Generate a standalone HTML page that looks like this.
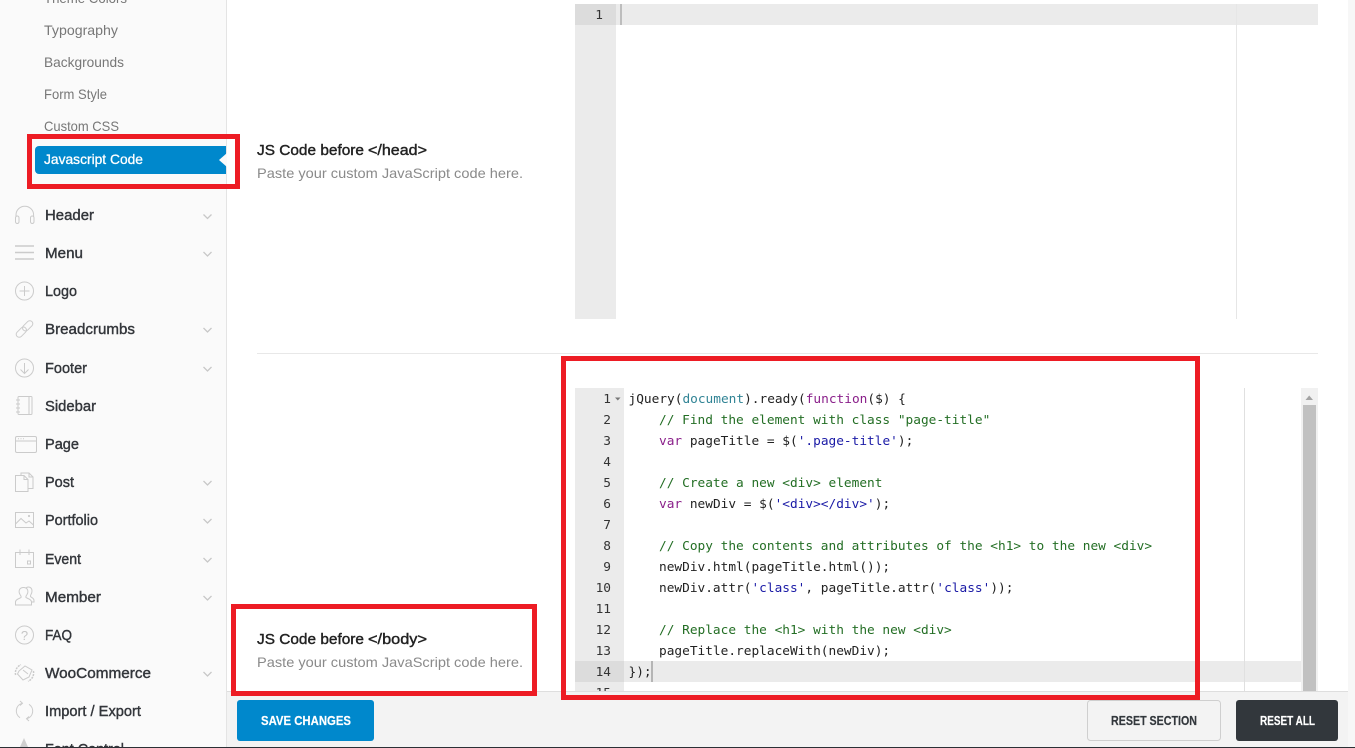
<!DOCTYPE html>
<html lang="en">
<head>
<meta charset="utf-8">
<title>Javascript Code</title>
<style>
html,body{margin:0;padding:0;width:1355px;height:748px;overflow:hidden;background:#fff}
svg{display:block}
.nav{font-family:"Liberation Sans",sans-serif;font-size:14.5px;fill:#33363b;stroke:#33363b;stroke-width:.4px}
.sub{font-family:"Liberation Sans",sans-serif;font-size:14px;fill:#777}
.lab{font-family:"Liberation Sans",sans-serif;font-size:14.5px;fill:#222;stroke:#222;stroke-width:.4px}
.desc{font-family:"Liberation Sans",sans-serif;font-size:14px;fill:#8a8a8a}
.btn{font-family:"Liberation Sans",sans-serif;font-size:13px;font-weight:bold;stroke-width:.2px}
.code{font-family:"DejaVu Sans Mono","Liberation Mono",monospace;font-size:12.8px;fill:#222}
.num{font-family:"DejaVu Sans Mono","Liberation Mono",monospace;font-size:12.8px;fill:#333;text-anchor:end}
.c{fill:#236e24}.k{fill:#8a1f8a}.s{fill:#1a1aa6}.d{fill:#318495}
.ic{fill:none;stroke:#cbcbcb;stroke-width:1}
.ch{fill:none;stroke:#c8c8c8;stroke-width:1.3}
</style>
</head>
<body>
<svg xmlns="http://www.w3.org/2000/svg" width="1355" height="748" viewBox="0 0 1355 748">
<defs>
<clipPath id="ed"><rect x="575" y="388" width="743" height="303"/></clipPath>
</defs>
<rect width="1355" height="748" fill="#fff"/>
<rect x="1348" y="0" width="7" height="748" fill="#f7f7f7"/>

<!-- sidebar -->
<rect x="0" y="0" width="226" height="748" fill="#fafafa"/>
<rect x="226" y="0" width="1" height="748" fill="#e4e4e4"/>
<text class="sub" x="44" y="3" textLength="83" lengthAdjust="spacingAndGlyphs">Theme Colors</text>
<text class="sub" x="44" y="35" textLength="74" lengthAdjust="spacingAndGlyphs">Typography</text>
<text class="sub" x="44" y="67" textLength="80" lengthAdjust="spacingAndGlyphs">Backgrounds</text>
<text class="sub" x="44" y="99" textLength="63" lengthAdjust="spacingAndGlyphs">Form Style</text>
<text class="sub" x="44" y="131" textLength="75" lengthAdjust="spacingAndGlyphs">Custom CSS</text>
<path d="M39 146H226V174H39a4 4 0 0 1-4-4V150a4 4 0 0 1 4-4z" fill="#0088cc"/>
<path d="M227 153L219 160L227 167z" fill="#fafafa"/>
<text class="sub" x="44" y="164" textLength="99" lengthAdjust="spacingAndGlyphs" style="fill:#fff;stroke:#fff;stroke-width:.3px">Javascript Code</text>

<text class="nav" x="45" y="220" textLength="49" lengthAdjust="spacingAndGlyphs">Header</text>
<text class="nav" x="45" y="258" textLength="38" lengthAdjust="spacingAndGlyphs">Menu</text>
<text class="nav" x="45" y="296" textLength="32" lengthAdjust="spacingAndGlyphs">Logo</text>
<text class="nav" x="45" y="334" textLength="90" lengthAdjust="spacingAndGlyphs">Breadcrumbs</text>
<text class="nav" x="45" y="373" textLength="42" lengthAdjust="spacingAndGlyphs">Footer</text>
<text class="nav" x="45" y="411" textLength="51" lengthAdjust="spacingAndGlyphs">Sidebar</text>
<text class="nav" x="45" y="449" textLength="34" lengthAdjust="spacingAndGlyphs">Page</text>
<text class="nav" x="45" y="487" textLength="29" lengthAdjust="spacingAndGlyphs">Post</text>
<text class="nav" x="45" y="525" textLength="53" lengthAdjust="spacingAndGlyphs">Portfolio</text>
<text class="nav" x="45" y="564" textLength="36" lengthAdjust="spacingAndGlyphs">Event</text>
<text class="nav" x="45" y="602" textLength="56" lengthAdjust="spacingAndGlyphs">Member</text>
<text class="nav" x="45" y="640" textLength="27" lengthAdjust="spacingAndGlyphs">FAQ</text>
<text class="nav" x="45" y="678" textLength="106" lengthAdjust="spacingAndGlyphs">WooCommerce</text>
<text class="nav" x="45" y="716" textLength="96" lengthAdjust="spacingAndGlyphs">Import / Export</text>
<text class="nav" x="45" y="754" textLength="79" lengthAdjust="spacingAndGlyphs">Font Control</text>

<!-- chevrons -->
<g class="ch">
<path d="M203.5 214.5L207.5 218.5L211.5 214.5"/>
<path d="M203.5 252L207.5 256L211.5 252"/>
<path d="M203.5 328L207.5 332L211.5 328"/>
<path d="M203.5 367L207.5 371L211.5 367"/>
<path d="M203.5 481L207.5 485L211.5 481"/>
<path d="M203.5 519L207.5 523L211.5 519"/>
<path d="M203.5 558L207.5 562L211.5 558"/>
<path d="M203.5 596L207.5 600L211.5 596"/>
<path d="M203.5 672L207.5 676L211.5 672"/>
</g>

<!-- icons -->
<g class="ic">
<path d="M16 217V215a8.800 8.800 0 0 1 17.600 0V217"/>
<rect x="15.500" y="216" width="3.500" height="7.500" rx="1.700"/>
<rect x="30.500" y="216" width="3.500" height="7.500" rx="1.700"/>
<path d="M15 246H34M15 252.500H34M15 259H34" stroke-width="1.400"/>
<circle cx="24.500" cy="291" r="9"/><path d="M24.500 286V296M19.500 291H29.500"/>
<g transform="rotate(-45 24.500 329)"><rect x="14" y="326" width="12" height="6" rx="3"/><rect x="23" y="326" width="12" height="6" rx="3"/></g>
<circle cx="24.500" cy="368" r="9"/><path d="M24.500 363V373M20.500 369.500L24.500 373.500L28.500 369.500"/>
<rect x="18" y="396.500" width="14" height="18" rx="1"/><path d="M29 396.500V414.500M16 400H20M16 404H20M16 408H20M16 412H20"/>
<rect x="15.500" y="436.500" width="21" height="16" rx="1.500"/><path d="M15.500 441H36.500M18 438.800H19M20.500 438.800H21.500M23 438.800H24"/>
<path d="M15.500 475.500H24L28 479.500V491.500H15.500zM24 475.500V479.500H28M21 475.500V473H29L33 477V488.500H28M29 473V477H33"/>
<rect x="15.500" y="512.500" width="18" height="15"/><path d="M15.500 524L21 518.500L26 523L29 521L33.500 525"/><circle cx="29" cy="516" r=".6"/>
<rect x="15.500" y="552.500" width="18" height="15"/><path d="M20 549.500V555M29 549.500V555"/><rect x="27.500" y="561" width="3" height="3"/>
<path d="M15.500 605V602C15.500 599 20 598.500 21 597.500C21.500 596.500 21 596 20 594.500C18 591 19.500 587.500 23.500 587.500C27.500 587.500 29 591 27 594.500C26 596 25.500 596.500 26 597.500C27 598.500 31.500 599 31.500 602V605z"/>
<path d="M26 588C28 586 32 587 32 591C32 594 30 595 30.500 596.500C31 597.500 34 598 34 600.500V602H32"/>
<circle cx="24.500" cy="635" r="9"/>
<path d="M15.600 675A9 9 0 0 1 21 664.700M33.400 671A9 9 0 0 1 28 681.300" stroke-width="1.500" stroke-dasharray="2 1"/>
<path d="M19 671L25 666L32 670L29 677L23 680L17.500 674z"/><path d="M23 670L28 674"/>
<path d="M22 703.300A8 8 0 0 0 20 717.700M27 718.700A8 8 0 0 0 29 704.300M20 701L22.500 703.300L20 705.500M29 716.500L26.500 718.700L29 721"/>
</g>
<text x="24.500" y="640" text-anchor="middle" style="font-family:'Liberation Sans',sans-serif;font-size:13px;fill:#c6c6c6">?</text>
<path d="M24 738L28 747H20z" fill="#cfcfcf"/>

<!-- first editor -->
<rect x="575" y="4" width="41" height="315" fill="#ebebeb"/>
<rect x="575" y="4" width="41" height="21" fill="#dcdcdc"/>
<rect x="616" y="4" width="702" height="21" fill="#ebebeb"/>
<rect x="620" y="4" width="2" height="21" fill="#bdbdbd"/>
<rect x="1236" y="4" width="1" height="315" fill="#e6e6e6"/>
<text class="num" x="603" y="19">1</text>

<!-- labels -->
<text class="lab" x="257" y="155" textLength="107" lengthAdjust="spacingAndGlyphs">JS Code before</text>
<text class="lab" x="368" y="155" textLength="59" lengthAdjust="spacingAndGlyphs">&lt;/head&gt;</text>
<text class="desc" x="257" y="178" textLength="266" lengthAdjust="spacingAndGlyphs">Paste your custom JavaScript code here.</text>
<rect x="257" y="353" width="1061" height="1" fill="#e8e8e8"/>
<text class="lab" x="257" y="644" textLength="107" lengthAdjust="spacingAndGlyphs">JS Code before</text>
<text class="lab" x="368" y="644" textLength="59" lengthAdjust="spacingAndGlyphs">&lt;/body&gt;</text>
<text class="desc" x="257" y="667" textLength="266" lengthAdjust="spacingAndGlyphs">Paste your custom JavaScript code here.</text>

<!-- second editor -->
<g clip-path="url(#ed)">
<rect x="575" y="388" width="49" height="303" fill="#ebebeb"/>
<rect x="575" y="661" width="49" height="21" fill="#dcdcdc"/>
<rect x="624" y="661" width="677" height="21" fill="#ebebeb"/>
<rect x="651" y="661" width="2" height="21" fill="#b5b5b5"/>
<rect x="1244" y="388" width="1" height="303" fill="#e0e0e0"/>
<rect x="1301" y="388" width="17" height="303" fill="#f1f1f1"/>
<rect x="1303" y="405" width="13" height="287" fill="#c1c1c1"/>
<path d="M1305.500 400H1313L1309.200 395.500z" fill="#a3a3a3"/>
<path d="M615 397.500H620.500L617.800 400.500z" fill="#777"/>
<text class="num" x="611" y="403">1</text>
<text class="num" x="611" y="424">2</text>
<text class="num" x="611" y="445">3</text>
<text class="num" x="611" y="466">4</text>
<text class="num" x="611" y="487">5</text>
<text class="num" x="611" y="508">6</text>
<text class="num" x="611" y="529">7</text>
<text class="num" x="611" y="550">8</text>
<text class="num" x="611" y="571">9</text>
<text class="num" x="611" y="592">10</text>
<text class="num" x="611" y="613">11</text>
<text class="num" x="611" y="634">12</text>
<text class="num" x="611" y="655">13</text>
<text class="num" x="611" y="676">14</text>
<text class="num" x="611" y="697">15</text>
<text class="code" x="628.500" y="403">jQuery(<tspan class="d">document</tspan>).ready(<tspan class="k">function</tspan>($) {</text>
<text class="code" x="659" y="424"><tspan class="c">// Find the element with class "page-title"</tspan></text>
<text class="code" x="659" y="445"><tspan class="k">var</tspan> pageTitle = $(<tspan class="s">'.page-title'</tspan>);</text>
<text class="code" x="659" y="487"><tspan class="c">// Create a new &lt;div&gt; element</tspan></text>
<text class="code" x="659" y="508"><tspan class="k">var</tspan> newDiv = $(<tspan class="s">'&lt;div&gt;&lt;/div&gt;'</tspan>);</text>
<text class="code" x="659" y="550"><tspan class="c">// Copy the contents and attributes of the &lt;h1&gt; to the new &lt;div&gt;</tspan></text>
<text class="code" x="659" y="571">newDiv.html(pageTitle.html());</text>
<text class="code" x="659" y="592">newDiv.attr(<tspan class="s">'class'</tspan>, pageTitle.attr(<tspan class="s">'class'</tspan>));</text>
<text class="code" x="659" y="634"><tspan class="c">// Replace the &lt;h1&gt; with the new &lt;div&gt;</tspan></text>
<text class="code" x="659" y="655">pageTitle.replaceWith(newDiv);</text>
<text class="code" x="628.500" y="676">});</text>
</g>

<!-- bottom bar -->
<rect x="227" y="691" width="1121" height="56" fill="#f3f3f3"/>
<rect x="227" y="691" width="1121" height="1" fill="#dedede"/>
<rect x="237" y="700" width="137" height="41" rx="3" fill="#0088cc"/>
<text class="btn" x="261" y="725" textLength="90" lengthAdjust="spacingAndGlyphs" fill="#fff" stroke="#fff">SAVE CHANGES</text>
<rect x="1087.500" y="700.500" width="133" height="40" rx="3" fill="#f3f3f3" stroke="#cfcfcf"/>
<text class="btn" x="1111" y="725" textLength="86" lengthAdjust="spacingAndGlyphs" fill="#32373c" stroke="#32373c">RESET SECTION</text>
<rect x="1236" y="700" width="102" height="41" rx="3" fill="#32373c"/>
<text class="btn" x="1260" y="725" textLength="55" lengthAdjust="spacingAndGlyphs" fill="#fff" stroke="#fff">RESET ALL</text>
<rect x="0" y="747" width="1355" height="1" fill="#2b3035"/>

<!-- red annotation boxes -->
<g fill="none" stroke="#ed1c24" stroke-width="5">
<rect x="29.500" y="136.500" width="208" height="50"/>
<rect x="233.500" y="606.500" width="301" height="87"/>
<rect x="563.500" y="358.500" width="634" height="339"/>
</g>
</svg>
</body>
</html>
